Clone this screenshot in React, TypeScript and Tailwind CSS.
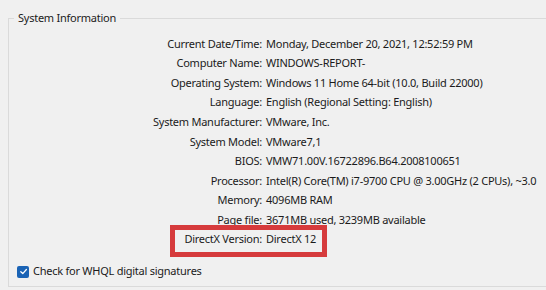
const rows: [string, string][] = [
  ["Current Date/Time:", "Monday, December 20, 2021, 12:52:59 PM"],
  ["Computer Name:", "WINDOWS-REPORT-"],
  ["Operating System:", "Windows 11 Home 64-bit (10.0, Build 22000)"],
  ["Language:", "English (Regional Setting: English)"],
  ["System Manufacturer:", "VMware, Inc."],
  ["System Model:", "VMware7,1"],
  ["BIOS:", "VMW71.00V.16722896.B64.2008100651"],
  ["Processor:", "Intel(R) Core(TM) i7-9700 CPU @ 3.00GHz (2 CPUs), ~3.0"],
  ["Memory:", "4096MB RAM"],
  ["Page file:", "3671MB used, 3239MB available"],
  ["DirectX Version:", "DirectX 12"],
];

export default function App() {
  return (
    <div
      className="w-[546px] h-[290px] overflow-hidden bg-[#f0f0f0] pt-[10px] pl-[8px] text-[11px] tracking-[-0.25px] text-[#1b1b1b]"
      style={{ fontFamily: '"Noto Sans", "Open Sans", sans-serif' }}
    >
      <fieldset className="w-[600px] border border-[#dadada] pl-[5px] pb-[6px]">
        <legend className="px-[4px] leading-[16px]">System Information</legend>

        <div className="mt-[8px]">
          {rows.map(([label, value]) => (
            <div key={label} className="relative flex h-[19.6px] items-center whitespace-nowrap">
              <span className="w-[248px] shrink-0 text-right">{label}</span>
              <span className="pl-[4px]">{value}</span>
              {label === "DirectX Version:" && (
                <span className="absolute left-[156px] top-[-5px] h-[32px] w-[157px] border-[5px] border-[#d63b3c]" />
              )}
            </div>
          ))}
        </div>

        {/* checkbox row */}
        <div className="mt-[14px] flex h-[16px] items-center gap-[4px] pl-[3px]">
          <span className="flex h-[12px] w-[12px] items-center justify-center rounded-[2px] bg-[#1a63b5]">
            <svg width="9" height="9" viewBox="0 0 10 10" fill="none">
              <path d="M2 5.2 L4.2 7.3 L8.2 2.8" stroke="white" strokeWidth="1.4" strokeLinecap="round" strokeLinejoin="round" />
            </svg>
          </span>
          <span>Check for WHQL digital signatures</span>
        </div>
      </fieldset>
    </div>
  );
}
